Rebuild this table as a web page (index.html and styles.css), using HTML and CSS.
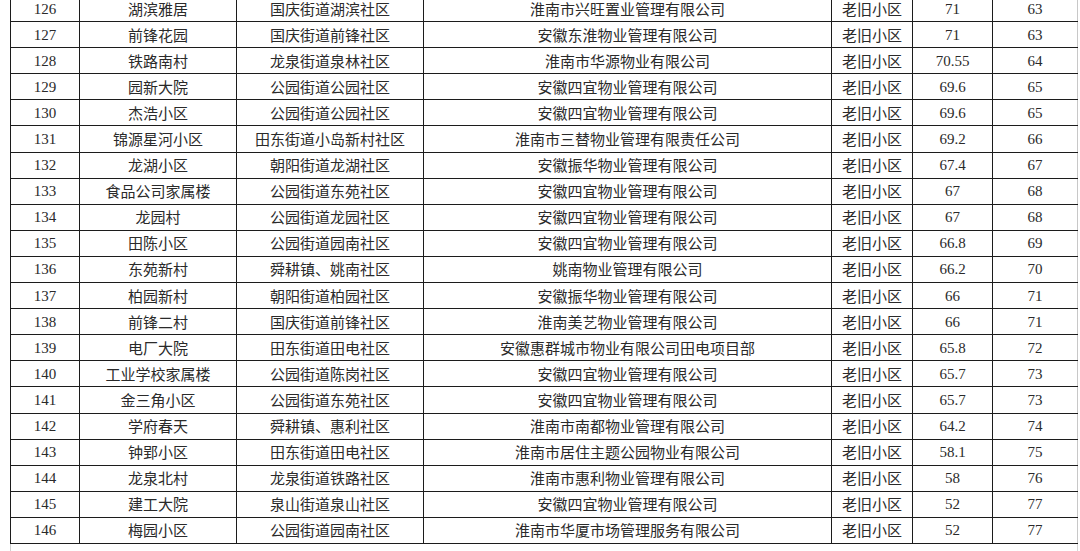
FILE: index.html
```html
<!DOCTYPE html>
<html lang="zh">
<head>
<meta charset="utf-8">
<link rel="stylesheet" href="styles.css">
</head>
<body>
<table class="list">
<colgroup>
<col class="c-no"><col class="c-name"><col class="c-street"><col class="c-co"><col class="c-type"><col class="c-score"><col class="c-rank">
</colgroup>
<tbody>
<tr><td class="num">126</td><td>湖滨雅居</td><td>国庆街道湖滨社区</td><td>淮南市兴旺置业管理有限公司</td><td>老旧小区</td><td class="num">71</td><td class="num">63</td></tr>
<tr><td class="num">127</td><td>前锋花园</td><td>国庆街道前锋社区</td><td>安徽东淮物业管理有限公司</td><td>老旧小区</td><td class="num">71</td><td class="num">63</td></tr>
<tr><td class="num">128</td><td>铁路南村</td><td>龙泉街道泉林社区</td><td>淮南市华源物业有限公司</td><td>老旧小区</td><td class="num">70.55</td><td class="num">64</td></tr>
<tr><td class="num">129</td><td>园新大院</td><td>公园街道公园社区</td><td>安徽四宜物业管理有限公司</td><td>老旧小区</td><td class="num">69.6</td><td class="num">65</td></tr>
<tr><td class="num">130</td><td>杰浩小区</td><td>公园街道公园社区</td><td>安徽四宜物业管理有限公司</td><td>老旧小区</td><td class="num">69.6</td><td class="num">65</td></tr>
<tr><td class="num">131</td><td>锦源星河小区</td><td>田东街道小岛新村社区</td><td>淮南市三替物业管理有限责任公司</td><td>老旧小区</td><td class="num">69.2</td><td class="num">66</td></tr>
<tr><td class="num">132</td><td>龙湖小区</td><td>朝阳街道龙湖社区</td><td>安徽振华物业管理有限公司</td><td>老旧小区</td><td class="num">67.4</td><td class="num">67</td></tr>
<tr><td class="num">133</td><td>食品公司家属楼</td><td>公园街道东苑社区</td><td>安徽四宜物业管理有限公司</td><td>老旧小区</td><td class="num">67</td><td class="num">68</td></tr>
<tr><td class="num">134</td><td>龙园村</td><td>公园街道龙园社区</td><td>安徽四宜物业管理有限公司</td><td>老旧小区</td><td class="num">67</td><td class="num">68</td></tr>
<tr><td class="num">135</td><td>田陈小区</td><td>公园街道园南社区</td><td>安徽四宜物业管理有限公司</td><td>老旧小区</td><td class="num">66.8</td><td class="num">69</td></tr>
<tr><td class="num">136</td><td>东苑新村</td><td>舜耕镇、姚南社区</td><td>姚南物业管理有限公司</td><td>老旧小区</td><td class="num">66.2</td><td class="num">70</td></tr>
<tr><td class="num">137</td><td>柏园新村</td><td>朝阳街道柏园社区</td><td>安徽振华物业管理有限公司</td><td>老旧小区</td><td class="num">66</td><td class="num">71</td></tr>
<tr><td class="num">138</td><td>前锋二村</td><td>国庆街道前锋社区</td><td>淮南美艺物业管理有限公司</td><td>老旧小区</td><td class="num">66</td><td class="num">71</td></tr>
<tr><td class="num">139</td><td>电厂大院</td><td>田东街道田电社区</td><td>安徽惠群城市物业有限公司田电项目部</td><td>老旧小区</td><td class="num">65.8</td><td class="num">72</td></tr>
<tr><td class="num">140</td><td>工业学校家属楼</td><td>公园街道陈岗社区</td><td>安徽四宜物业管理有限公司</td><td>老旧小区</td><td class="num">65.7</td><td class="num">73</td></tr>
<tr><td class="num">141</td><td>金三角小区</td><td>公园街道东苑社区</td><td>安徽四宜物业管理有限公司</td><td>老旧小区</td><td class="num">65.7</td><td class="num">73</td></tr>
<tr><td class="num">142</td><td>学府春天</td><td>舜耕镇、惠利社区</td><td>淮南市南都物业管理有限公司</td><td>老旧小区</td><td class="num">64.2</td><td class="num">74</td></tr>
<tr><td class="num">143</td><td>钟郢小区</td><td>田东街道田电社区</td><td>淮南市居住主题公园物业有限公司</td><td>老旧小区</td><td class="num">58.1</td><td class="num">75</td></tr>
<tr><td class="num">144</td><td>龙泉北村</td><td>龙泉街道铁路社区</td><td>淮南市惠利物业管理有限公司</td><td>老旧小区</td><td class="num">58</td><td class="num">76</td></tr>
<tr><td class="num">145</td><td>建工大院</td><td>泉山街道泉山社区</td><td>安徽四宜物业管理有限公司</td><td>老旧小区</td><td class="num">52</td><td class="num">77</td></tr>
<tr><td class="num">146</td><td>梅园小区</td><td>公园街道园南社区</td><td>淮南市华厦市场管理服务有限公司</td><td>老旧小区</td><td class="num">52</td><td class="num">77</td></tr>
<tr class="tail"><td colspan="7"></td></tr>
</tbody>
</table>
</body>
</html>
```

FILE: styles.css
```css
html, body {
  margin: 0;
  padding: 0;
  background: #fff;
  overflow: hidden;
}

.list {
  margin: -5px 0 0 10px;
  border-collapse: collapse;
  table-layout: fixed;
  width: 1067px;
  color: #2a2a2a;
  font-family: "Noto Sans CJK SC", "Noto Sans", sans-serif;
  font-size: 15px;
}

.c-no { width: 69px; }
.c-name { width: 157px; }
.c-street { width: 187px; }
.c-co { width: 408px; }
.c-type { width: 81px; }
.c-score { width: 80px; }
.c-rank { width: 85px; }

.list td {
  height: 26.1px;
  padding: 0;
  text-align: center;
  vertical-align: middle;
  white-space: nowrap;
  border: 1px solid #1c1c1c;
  line-height: 18px;
  box-sizing: border-box;
}

.list td.num {
  font-family: "Liberation Serif", "Times New Roman", serif;
  font-size: 15px;
}

.list td:last-child {
  border-right-color: #c8c8c8;
}

.list tr.tail td {
  height: 30px;
  border-top: 1px solid #1c1c1c;
  border-bottom: none;
  border-left: 1px solid #d0d0d0;
  border-right: 1px solid #d8d8d8;
}
```
